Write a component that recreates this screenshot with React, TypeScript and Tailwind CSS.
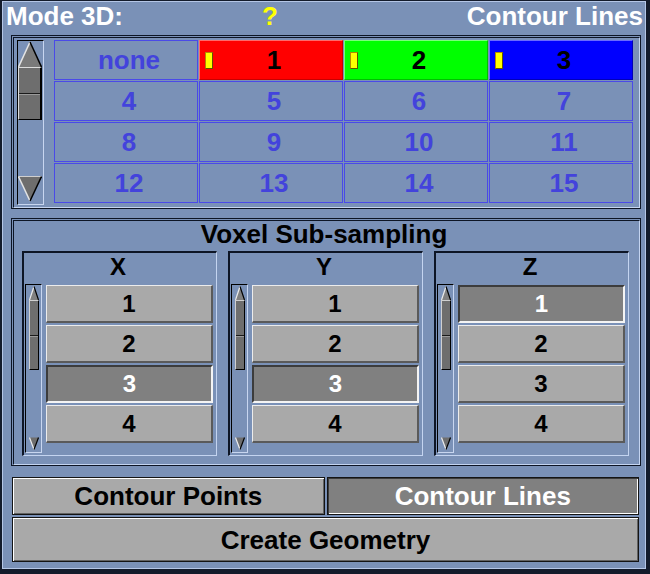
import React from 'react';

const gridCells = ['none', '1', '2', '3', '4', '5', '6', '7', '8', '9', '10', '11', '12', '13', '14', '15'];

const colored: Record<string, string> = {
  '1': 'bg-[#ff0000] border-t-[#ff6a6a] border-l-[#ff6a6a] border-r-[#c80000] border-b-[#c80000]',
  '2': 'bg-[#00ff00] border-t-[#7aff7a] border-l-[#7aff7a] border-r-[#00c000] border-b-[#00c000]',
  '3': 'bg-[#0000ff] border-t-[#6a6aff] border-l-[#6a6aff] border-r-[#0000b8] border-b-[#0000b8]',
};

function Frame({ className = '', children }: { className?: string; children: React.ReactNode }) {
  return (
    <div className={`border border-[#0d1525] pt-px pl-px ${className}`}>
      <div className="border border-[#0d1525] border-r-[#c4d4f0] border-b-[#c4d4f0]">{children}</div>
    </div>
  );
}

function BigScrollbar() {
  return (
    <div className="w-[27px] h-[165px] border border-black border-r-[#c8d6f0] border-b-[#c8d6f0] flex flex-col pr-px">
      <svg width="24" height="26" viewBox="0 0 24 26" className="block">
        <polygon points="12,1 0.5,26 23.5,26" fill="#7a7a7a" />
        <line x1="12" y1="1" x2="0.5" y2="26" stroke="#e4e4e4" strokeWidth="1.5" />
        <line x1="12" y1="1" x2="23.5" y2="26" stroke="#000" strokeWidth="1.5" />
      </svg>
      <div className="h-[53px] bg-[#6e6e6e] border-t border-l border-[#dcdcdc] border-r-2 border-r-black border-b border-b-black flex flex-col">
        <div className="h-[26px] border-b border-b-[#1a1a1a]" />
        <div className="h-px bg-[#9a9a9a]" />
      </div>
      <div className="flex-1" />
      <svg width="24" height="26" viewBox="0 0 24 26" className="block mb-[2px]">
        <polygon points="0.5,0.5 23.5,0.5 12,25" fill="#6e6e6e" />
        <line x1="0.5" y1="0.5" x2="23.5" y2="0.5" stroke="#cfcfcf" strokeWidth="1" />
        <line x1="0.5" y1="0.5" x2="12" y2="25" stroke="#e4e4e4" strokeWidth="1.5" />
        <line x1="23.5" y1="0.5" x2="12" y2="25" stroke="#000" strokeWidth="1.5" />
      </svg>
    </div>
  );
}

function SmallScrollbar() {
  return (
    <div className="w-[17px] h-[169px] border border-black border-r-[#c8d6f0] border-b-[#c8d6f0] flex flex-col pl-[3px] pr-[2px]">
      <svg width="10" height="15" viewBox="0 0 10 15" className="block">
        <polygon points="5,1.5 0.5,15 9.5,15" fill="#808080" />
        <line x1="5" y1="1.5" x2="0.5" y2="15" stroke="#ececec" strokeWidth="1.2" />
        <line x1="5" y1="1.5" x2="9.5" y2="15" stroke="#000" strokeWidth="1.2" />
      </svg>
      <div className="h-[70px] bg-[#6e6e6e] border-l border-t border-[#d0d0d0] border-r border-r-black border-b border-b-black flex flex-col">
        <div className="h-[35px] border-b border-b-[#1a1a1a]" />
        <div className="h-px bg-[#9a9a9a]" />
      </div>
      <div className="flex-1" />
      <svg width="10" height="13" viewBox="0 0 10 13" className="block mb-[2px]">
        <polygon points="0.5,0.5 9.5,0.5 5,12.5" fill="#6e6e6e" />
        <line x1="0.5" y1="0.5" x2="5" y2="12.5" stroke="#ececec" strokeWidth="1.2" />
        <line x1="9.5" y1="0.5" x2="5" y2="12.5" stroke="#000" strokeWidth="1.2" />
      </svg>
    </div>
  );
}

function Axis({ label, selected }: { label: string; selected: number }) {
  return (
    <div className="w-[195px] h-[205px] border-t-2 border-l-2 border-r border-b border-[#0d1525] border-r-[#c4d4f0] border-b-[#c4d4f0] flex flex-col">
      <div className="mt-px pr-[4px] h-[26px] leading-[26px] text-center text-[24px] text-black">{label}</div>
      <div className="mt-[4px] flex">
        <div className="ml-px">
          <SmallScrollbar />
        </div>
        <div className="ml-[4px] mt-px flex flex-col gap-[2px]">
          {[1, 2, 3, 4].map(n =>
            n === selected ? (
              <div
                key={n}
                className="w-[167px] h-[38px] bg-[#808080] border-2 border-[#3c3c3c] border-r-[#f4f4f4] border-b-[#f4f4f4] flex items-center justify-center text-[24px] leading-none text-white"
              >
                {n}
              </div>
            ) : (
              <div
                key={n}
                className="w-[167px] h-[38px] bg-[#a9a9a9] border-t border-l border-r-2 border-b-2 border-[#ececec] border-r-[#5a5a5a] border-b-[#5a5a5a] flex items-center justify-center text-[24px] leading-none text-black"
              >
                {n}
              </div>
            )
          )}
        </div>
      </div>
    </div>
  );
}

export default function App() {
  return (
    <div className="w-[650px] h-[574px] bg-[#7a91b7] border-t border-l-2 border-r-4 border-b-[5px] border-[#131b2b] font-['Liberation_Sans',Arial,sans-serif] font-bold">
      <div className="h-full border border-[#b4c6e6] flex flex-col">
        {/* header */}
        <div className="h-[33px] pl-[3px] pr-[2px] flex items-start text-[26px] leading-[28px] text-white">
          <span className="w-[256px]">Mode 3D:</span>
          <span className="text-[#ffff00]">?</span>
          <span className="ml-auto">Contour Lines</span>
        </div>

        {/* colour grid */}
        <Frame className="ml-[8px] w-[630px]">
          <div className="pt-[2px] pb-[2px] pl-[3px] pr-[5px] flex gap-[10px]">
            <BigScrollbar />
            <div className="grid grid-cols-[repeat(4,144px)] grid-rows-[repeat(4,40px)] gap-px">
              {gridCells.map(c => {
                const col = colored[c];
                if (col) {
                  return (
                    <div key={c} className={`relative border pl-[6px] flex items-center justify-center text-[26px] leading-none text-black ${col}`}>
                      <span className="absolute left-[5px] top-[11px] w-[8px] h-[17px] bg-[#ffff00] border border-[#b08a00] border-r-[#5e5200] border-b-[#5e5200]" />
                      {c}
                    </div>
                  );
                }
                return (
                  <div key={c} className="border border-[#4a4ae8] pl-[6px] flex items-center justify-center text-[26px] leading-none text-[#4343dc]">
                    {c}
                  </div>
                );
              })}
            </div>
          </div>
        </Frame>

        {/* voxel sub-sampling */}
        <Frame className="ml-[8px] mt-[9px] w-[630px]">
          <div className="pb-[8px]">
            <div className="h-[26px] pr-[5px] leading-[26px] text-center text-[26px] text-black">Voxel Sub-sampling</div>
            <div className="mt-[4px] pl-[8px] flex gap-[11px]">
              <Axis label="X" selected={3} />
              <Axis label="Y" selected={3} />
              <Axis label="Z" selected={1} />
            </div>
          </div>
        </Frame>

        {/* bottom buttons */}
        <div className="ml-[9px] mt-[11px] w-[627px] flex flex-col gap-[2px] text-[26px]">
          <div className="flex gap-[2px] h-[38px]">
            <div className="flex-1 bg-[#a9a9a9] border border-[#141414] shadow-[inset_1px_1px_0_#ffffff,inset_-1px_-1px_0_#626262] flex items-center justify-center leading-none text-black">
              Contour Points
            </div>
            <div className="flex-1 bg-[#808080] border border-[#141414] shadow-[inset_1px_1px_0_#3c3c3c,inset_-1px_-1px_0_#ffffff] flex items-center justify-center leading-none text-white">
              Contour Lines
            </div>
          </div>
          <div className="h-[45px] bg-[#a9a9a9] border border-[#141414] shadow-[inset_1px_1px_0_#ffffff,inset_-1px_-1px_0_#626262] flex items-center justify-center leading-none text-black">
            Create Geometry
          </div>
        </div>
      </div>
    </div>
  );
}
